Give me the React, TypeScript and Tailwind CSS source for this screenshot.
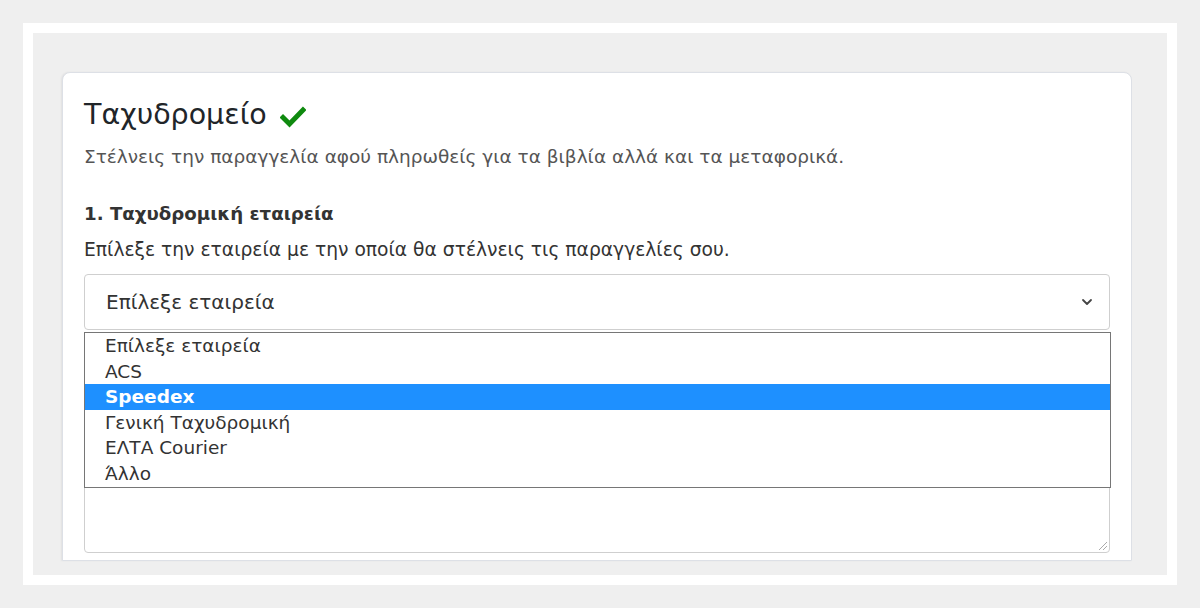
import React from "react";

const companies = ["Επίλεξε εταιρεία", "ACS", "Speedex", "Γενική Ταχυδρομική", "ΕΛΤΑ Courier", "Άλλο"];

function Check() {
  return (
    <svg width="26" height="22" viewBox="0 0 26 22" className="ml-[13px] mt-1">
      <path d="M3 11.5 L9.5 18 L23 4" fill="none" stroke="#0f8a0f" strokeWidth="5" strokeLinecap="square" strokeLinejoin="miter" />
    </svg>
  );
}

export default function App() {
  return (
    <div className="h-[608px] w-[1200px] bg-[#efefef] p-[23px] font-['DejaVu_Sans',sans-serif]">
      <div className="h-full bg-white p-[10px]">
        <div className="h-full bg-[#efefef] pl-[29px] pr-[35px] pt-[39px]">
          <div className="relative h-[489px] overflow-hidden rounded-t-lg border border-[#dde0e6] bg-white px-[21px] pt-[22px] shadow-[-1px_0_2px_rgba(0,0,0,0.06)]">
            <div className="flex items-center">
              <h1 className="text-[28.5px] leading-[40px] text-[#212529]">Ταχυδρομείο</h1>
              <Check />
            </div>
            <p className="mt-[9px] text-[18.5px] leading-[26px] text-[#555]">
              Στέλνεις την παραγγελία αφού πληρωθείς για τα βιβλία αλλά και τα μεταφορικά.
            </p>
            <h2 className="mt-[31px] text-[18.2px] font-bold leading-[26px] text-[#333]">1. Ταχυδρομική εταιρεία</h2>
            <p className="mt-[10px] text-[18.7px] leading-[26px] text-[#333]">
              Επίλεξε την εταιρεία με την οποία θα στέλνεις τις παραγγελίες σου.
            </p>
            <div className="relative mt-[11px]">
              <div className="flex h-[56px] items-center justify-between rounded border border-[#cfcfcf] pl-[21px] pr-[16px] text-[20px] text-[#333]">
                <span>Επίλεξε εταιρεία</span>
                <svg width="12" height="8" viewBox="0 0 12 8">
                  <path d="M2 2 L6 6 L10 2" fill="none" stroke="#444" strokeWidth="1.8" strokeLinecap="round" strokeLinejoin="round" />
                </svg>
              </div>
              <div className="relative mt-[16px] h-[207px] rounded border border-[#cfcfcf]">
                <svg width="12" height="12" viewBox="0 0 12 12" className="absolute bottom-[1px] right-[1px]">
                  <path d="M11 3 L3 11 M11 7 L7 11" stroke="#aaa" strokeWidth="1" />
                </svg>
              </div>
              <ul className="absolute left-0 right-[-1px] top-[58px] z-10 h-[156px] border border-[#767676] bg-white text-[18.5px] leading-[25.6px] text-[#333]">
                {companies.map((c, i) => (
                  <li
                    key={c}
                    className={
                      i === 2
                        ? "bg-[#1e90ff] pl-[20px] font-bold text-white"
                        : "pl-[20px]"
                    }
                  >
                    {c}
                  </li>
                ))}
              </ul>
            </div>
          </div>
        </div>
      </div>
    </div>
  );
}
